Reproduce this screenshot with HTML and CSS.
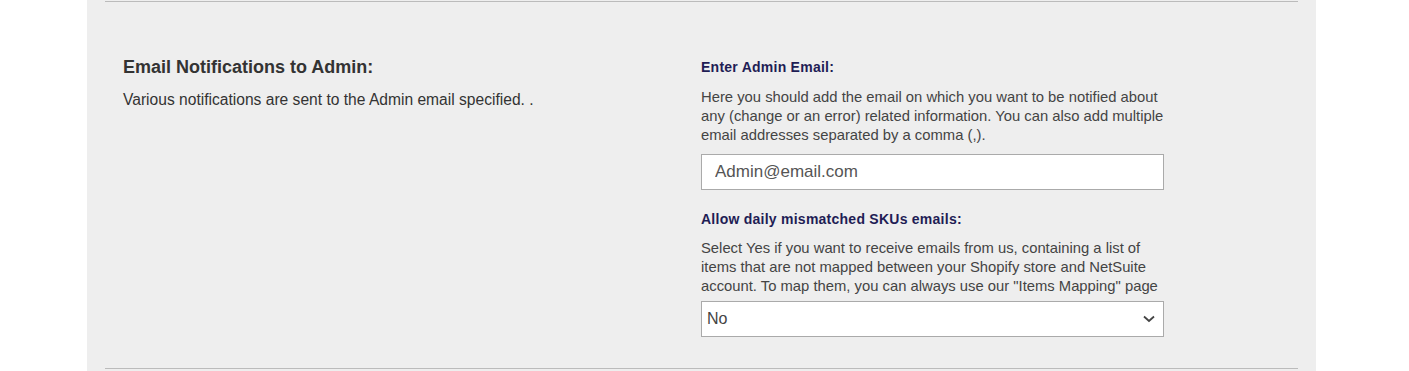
FILE: index.html
```html
<!DOCTYPE html>
<html>
<head>
<meta charset="utf-8">
<link rel="stylesheet" href="styles.css">
</head>
<body>
<div class="panel">
  <hr class="divider">
  <div class="row">
    <div class="col col-left">
      <h3 class="section-title">Email Notifications to Admin:</h3>
      <p class="section-desc">Various notifications are sent to the Admin email specified. .</p>
    </div>
    <div class="col col-right">
      <div class="field">
        <label class="field-label">Enter Admin Email:</label>
        <p class="field-help">Here you should add the email on which you want to be notified about any (change or an error) related information. You can also add multiple email addresses separated by a comma (,).</p>
        <input class="text-input" type="text" value="Admin@email.com">
      </div>
      <div class="field field-select">
        <label class="field-label">Allow daily mismatched SKUs emails:</label>
        <p class="field-help">Select Yes if you want to receive emails from us, containing a list of items that are not mapped between your Shopify store and NetSuite account. To map them, you can always use our "Items Mapping" page</p>
        <div class="select">
          <span class="select-value">No</span>
          <svg class="chevron" width="12" height="8" viewBox="0 0 12 8"><path d="M1 1.5 L6 6 L11 1.5" fill="none" stroke="#444" stroke-width="1.8"/></svg>
        </div>
      </div>
    </div>
  </div>
  <hr class="divider bottom">
</div>
</body>
</html>
```
FILE: styles.css
```css
html, body {
  margin: 0;
  padding: 0;
  background: #ffffff;
}
body {
  font-family: "Liberation Sans", Arial, sans-serif;
  color: #333;
}
.panel {
  margin-left: 87px;
  width: 1229px;
  height: 371px;
  background: #eeeeee;
  padding: 0 18px;
  box-sizing: border-box;
  display: flex;
  flex-direction: column;
}
.divider {
  border: 0;
  border-top: 1px solid #bbbbbb;
  margin: 1px 0 0 0;
  height: 0;
}
.divider.bottom {
  margin: 0 0 2px 0;
}
.row {
  display: flex;
  flex: 1;
  padding-top: 55px;
}
.col {
  box-sizing: border-box;
}
.col-left {
  flex: 0 0 596px;
  padding: 0 18px;
}
.col-right {
  flex: 1;
  padding-top: 1px;
}
.section-title {
  font-size: 18px;
  font-weight: bold;
  margin: 0;
  line-height: 21px;
  color: #333;
}
.section-desc {
  font-size: 15.6px;
  margin: 12px 0 0 0;
  line-height: 20px;
  color: #333;
}
.field {
  width: 463px;
}
.field + .field {
  margin-top: 20px;
}
.field-label {
  display: block;
  font-size: 14px;
  font-weight: bold;
  color: #1f1d55;
  letter-spacing: 0.25px;
  line-height: 18px;
}
.field-help {
  font-size: 14.8px;
  line-height: 19px;
  color: #444;
  margin: 12px 0 9px 0;
}
.field-select .field-help {
  margin: 11px 0 5px 0;
}
.text-input {
  display: block;
  width: 463px;
  height: 36px;
  box-sizing: border-box;
  border: 1px solid #aaaaaa;
  background: #fff;
  padding: 0 13px;
  font-family: "Liberation Sans", Arial, sans-serif;
  font-size: 17px;
  color: #555;
  outline: none;
  margin: 0;
}
.select {
  display: flex;
  align-items: center;
  justify-content: space-between;
  width: 463px;
  height: 36px;
  box-sizing: border-box;
  border: 1px solid #aaaaaa;
  background: #fff;
  padding: 0 8px 0 5px;
}
.select-value {
  font-size: 16px;
  color: #444;
}
.chevron {
  display: block;
}
```
